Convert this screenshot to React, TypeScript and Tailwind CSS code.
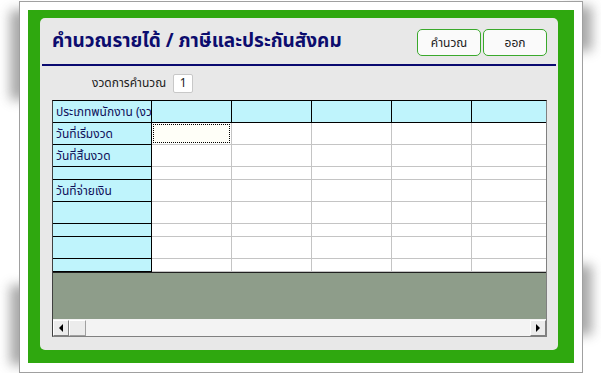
import React from "react";

const rowHeights = [22, 22, 13, 22, 22, 13, 22, 13];
const rowLabels = ["วันที่เริ่มงวด", "วันที่สิ้นงวด", "", "วันที่จ่ายเงิน", "", "", "", ""];
const dataCols = [80, 80, 80, 80];

function ScrollBtn({ dir }: { dir: "l" | "r" }) {
  return (
    <div className="w-[16px] h-[16px] bg-[#ececec] border-t border-l border-white border-r border-b border-r-[#808080] border-b-[#808080] flex items-center justify-center">
      {dir === "l" ? (
        <div className="w-0 h-0 border-y-[4px] border-y-transparent border-r-[4px] border-r-black" />
      ) : (
        <div className="w-0 h-0 border-y-[4px] border-y-transparent border-l-[4px] border-l-black" />
      )}
    </div>
  );
}

export default function App() {
  const font = { fontFamily: "Tahoma, 'Noto Sans Thai', 'DejaVu Sans', sans-serif" };
  return (
    <div className="w-[601px] h-[373px] bg-white relative overflow-hidden" style={font}>
      <div className="absolute left-[10px] top-[10px] w-[26px] h-[90px] bg-[#707070] blur-[6px] opacity-60" />
      <div className="absolute left-[10px] top-[285px] w-[26px] h-[80px] bg-[#707070] blur-[6px] opacity-60" />
      <div className="absolute left-[566px] top-[6px] w-[26px] h-[45px] bg-[#707070] blur-[6px] opacity-60" />
      <div className="absolute left-[566px] top-[265px] w-[26px] h-[70px] bg-[#707070] blur-[6px] opacity-60" />
      <div className="relative ml-[19px] mt-[1px] w-[564px] h-[372px] border border-[#a0a0a0] bg-white p-[8px] pb-[8px]">
        <div className="w-[546px] h-[353px] bg-[#2fa80f] pl-[12px] pt-[8px]">
          <div className="w-[518px] h-[332px] bg-[#e8e8e8] rounded-[5px] flex flex-col">
            <div className="h-[46px] flex items-center pl-[12px] pr-[11px]">
              <div className="text-[19px] font-bold text-[#0c0c6e] leading-none">
                คำนวณรายได้ / ภาษีและประกันสังคม
              </div>
              <div className="ml-auto flex gap-[2px] mt-[3px]">
                <div className="w-[64px] h-[27px] bg-[#fafafa] border border-[#3aa92c] rounded-[5px] flex items-center justify-center text-[12px] text-[#202020]">
                  คำนวณ
                </div>
                <div className="w-[64px] h-[27px] bg-[#fafafa] border border-[#3aa92c] rounded-[5px] flex items-center justify-center text-[12px] text-[#202020]">
                  ออก
                </div>
              </div>
            </div>
            <div className="mx-[2px] h-[2px] bg-[#0a0a70]" />
            <div className="h-[34px] flex items-center pl-[52px]">
              <span className="text-[12px] text-[#202020]">งวดการคำนวณ</span>
              <div className="ml-[7px] w-[20px] h-[19px] bg-white border border-[#c8c8c8] rounded-[2px] flex items-center justify-center text-[12px] text-[#202020]">
                1
              </div>
            </div>
            <div className="ml-[12px] w-[495px] h-[237px] border-t border-l border-t-black border-l-[#404040] border-r border-b border-r-[#808080] border-b-[#808080] flex flex-col">
              <div className="flex flex-col overflow-hidden">
                <div className="flex h-[22px]">
                  <div className="w-[99px] h-full bg-[#bff4fc] border-r border-b border-black text-[12px] text-[#10105a] pl-[3px] flex items-center whitespace-nowrap overflow-hidden">
                    ประเภทพนักงาน (งว
                  </div>
                  {dataCols.map((w, i) => (
                    <div key={i} className="w-[80px] h-full bg-[#bff4fc] border-r border-b border-black" />
                  ))}
                  <div className="flex-1 h-full bg-[#bff4fc] border-b border-black" />
                </div>
                {rowHeights.map((h, r) => (
                  <div key={r} className="flex" style={{ height: h }}>
                    <div className="w-[99px] h-full bg-[#bff4fc] border-r border-b border-black text-[12px] text-[#10105a] pl-[3px] flex items-center whitespace-nowrap overflow-hidden">
                      {rowLabels[r]}
                    </div>
                    {dataCols.map((w, i) => (
                      <div key={i} className="w-[80px] h-full bg-white border-r border-b border-[#c4c4c4] p-[1px]">
                        {r === 0 && i === 0 ? (
                          <div className="w-full h-full border border-dotted border-black bg-[#fffff8]" />
                        ) : null}
                      </div>
                    ))}
                    <div className="flex-1 h-full bg-white border-b border-[#c4c4c4]" />
                  </div>
                ))}
              </div>
              <div className="flex-1 bg-[#8e9d8a] border-t border-[#202020]" />
              <div className="h-[17px] bg-[#f3f3f3] flex items-center">
                <ScrollBtn dir="l" />
                <div className="w-[17px] h-[16px] bg-[#ececec] border-t border-l border-white border-r border-b border-r-[#a0a0a0] border-b-[#a0a0a0]" />
                <div className="flex-1" />
                <ScrollBtn dir="r" />
              </div>
            </div>
          </div>
        </div>
      </div>
    </div>
  );
}
